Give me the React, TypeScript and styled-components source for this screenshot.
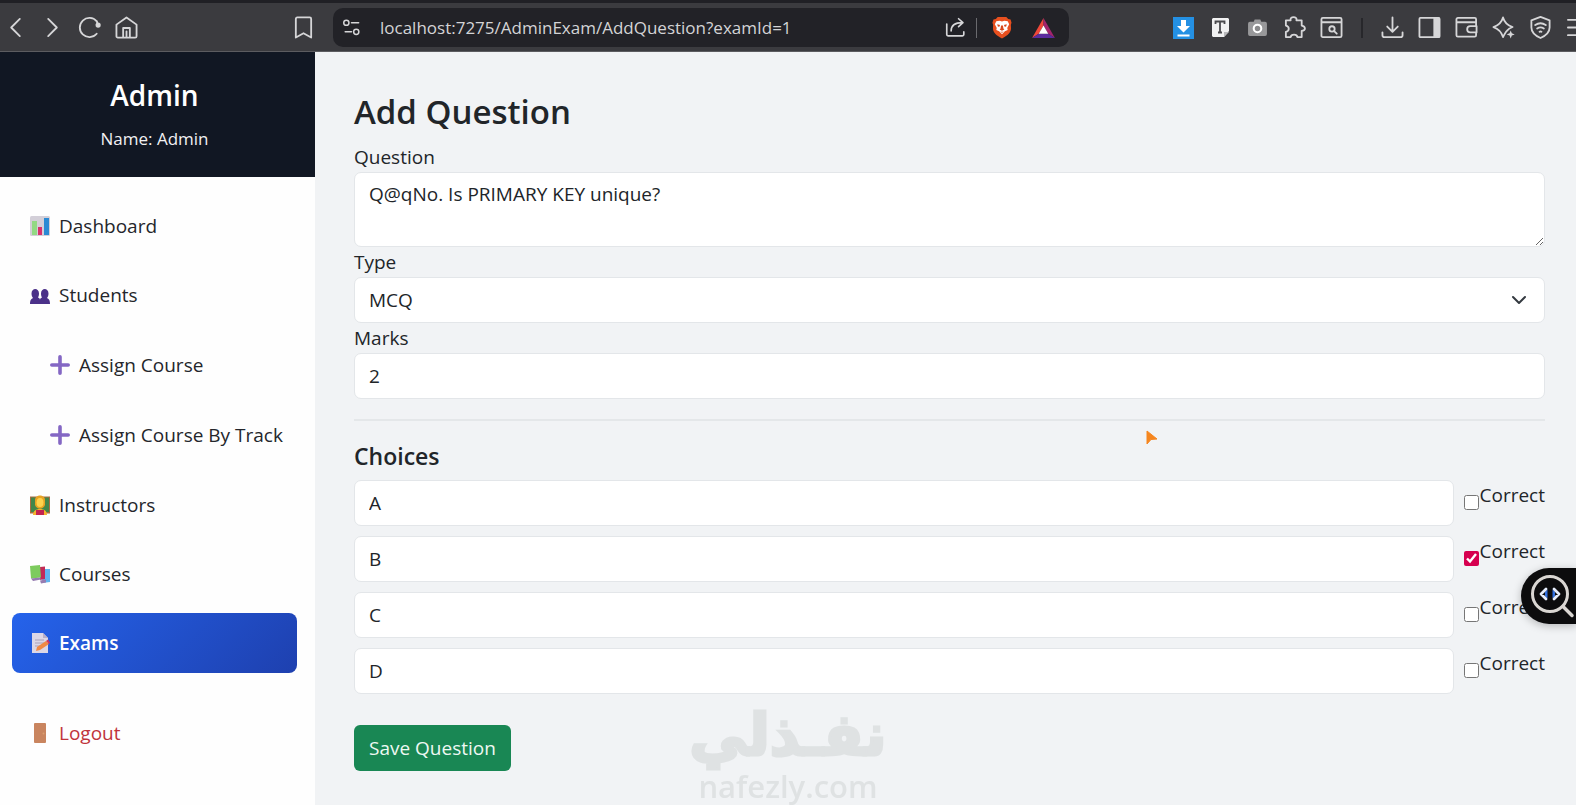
import React, { useState } from "react";
import styled, { createGlobalStyle, css } from "styled-components";

const GlobalStyle = createGlobalStyle`
  *, *::before, *::after { box-sizing: border-box; }
  body {
    margin: 0;
    background: #f1f3f5;
    color: #212529;
    font-family: "Open Sans", "Noto Sans", sans-serif;
    font-size: 19px;
    line-height: 30px;
  }
  h1, h2, h3, p, ul { margin: 0; padding: 0; }
  ul { list-style: none; }
  input, select, textarea, button { font: inherit; color: inherit; }
`;

const Page = styled.div`
  min-height: 100vh;
  display: flex;
  flex-direction: column;
`;

/* ---------- Browser bar ---------- */

const BrowserBar = styled.header`
  height: 52px;
  display: flex;
  align-items: center;
  padding-top: 1px;
  border-top: 3px solid #202025;
  background: #3b3b3f;
  border-bottom: 1px solid #5c5c60;
  overflow: hidden;
`;

const BarGroup = styled.div<{ $side: "left" | "right" }>`
  display: flex;
  align-items: center;
  flex: none;
  ${({ $side }) =>
    $side === "left" ? "margin-left: -3px;" : "margin-left: 96px; margin-right: -20px;"}
`;

const BarButton = styled.button`
  width: 37px;
  height: 38px;
  flex: none;
  padding: 0;
  border: 0;
  background: none;
  color: #d6d6d8;
  display: flex;
  align-items: center;
  justify-content: center;
`;

const Bookmark = styled(BarButton)`
  margin: 0 11px 0 140px;
`;

const AddressBar = styled.div`
  flex: 1;
  min-width: 0;
  height: 39px;
  display: flex;
  align-items: center;
  padding-right: 7px;
  border-radius: 10px;
  background: #222227;
`;

const Address = styled.input`
  flex: 1;
  min-width: 0;
  margin-left: 10px;
  padding: 0;
  border: 0;
  outline: 0;
  background: none;
  color: #d4d4d6;
  font-size: 17px;
`;

const PillDivider = styled.span`
  width: 1px;
  height: 20px;
  margin: 0 6px 0 2px;
  background: #6a6a6e;
`;

const PillActions = styled.div`
  display: flex;
  gap: 5px;
`;

const BarDivider = styled.span`
  width: 2px;
  height: 20px;
  margin: 0 11px;
  background: #27272b;
`;

/* ---------- Sidebar ---------- */

const Body = styled.div`
  flex: 1;
  display: flex;
`;

const Sidebar = styled.aside`
  width: 315px;
  flex: none;
  background: #fefefe;
`;

const Profile = styled.div`
  height: 125px;
  padding: 24px 6px 0 0;
  background: #111723;
  color: #fff;
  text-align: center;
`;

const ProfileTitle = styled.h2`
  font-size: 28px;
  font-weight: 600;
  line-height: 38px;
`;

const ProfileName = styled.p`
  margin-top: 10px;
  font-size: 17px;
  color: #f1f1f3;
`;

const Menu = styled.ul`
  display: flex;
  flex-direction: column;
  gap: 9px;
  padding: 19px 18px 0 12px;
`;

const SubMenu = styled.ul`
  display: flex;
  flex-direction: column;
  gap: 10px;
  padding: 10px 0 1px 20px;
`;

const MenuLink = styled.a<{ $active?: boolean; $danger?: boolean }>`
  height: 60px;
  display: flex;
  align-items: center;
  gap: 9px;
  padding-left: 18px;
  border-radius: 8px;
  color: ${({ $danger }) => ($danger ? "#c0343b" : "#24262b")};
  text-decoration: none;
  white-space: nowrap;
  ${({ $active }) =>
    $active &&
    css`
      background: linear-gradient(135deg, #2563eb, #1e40af);
      color: #fff;
      font-weight: 600;
    `}
`;

const LogoutEntry = styled.li`
  margin-top: 21px;
`;

/* ---------- Form ---------- */

const Content = styled.main`
  flex: 1;
  min-width: 0;
  padding: 38px 31px 0 39px;
`;

const Title = styled.h1`
  font-size: 33px;
  font-weight: 600;
  line-height: 44px;
  margin-bottom: 8px;
`;

const Label = styled.label`
  display: block;
  width: fit-content;
`;

const control = css`
  display: block;
  width: 100%;
  border: 1px solid #e3e6e9;
  border-radius: 7px;
  background: #fff;
  outline: 0;
  padding: 0 14px;
`;

const TextArea = styled.textarea`
  ${control}
  height: 75px;
  padding-top: 6px;
`;

const TextInput = styled.input`
  ${control}
  height: 46px;
`;

const SelectWrap = styled.div`
  position: relative;
`;

const Select = styled.select`
  ${control}
  height: 46px;
  appearance: none;
`;

const Chevron = styled.svg`
  position: absolute;
  right: 18px;
  top: 15px;
  pointer-events: none;
`;

const Divider = styled.hr`
  margin: 20px 0 18px;
  border: 0;
  height: 2px;
  background: #e4e7e9;
`;

const SectionTitle = styled.h3`
  font-size: 23px;
  font-weight: 600;
  line-height: 34px;
  margin-bottom: 7px;
`;

const Choices = styled.div`
  display: flex;
  flex-direction: column;
  gap: 10px;
  margin-bottom: 31px;
`;

const ChoiceRow = styled.div`
  display: flex;
  gap: 10px;
`;

const Correct = styled.label`
  flex: none;
  display: flex;
  gap: 1px;
`;

const CheckBox = styled.input`
  width: 15px;
  height: 15px;
  margin: 15px 0 0;
  accent-color: #d6004f;
`;

const SaveButton = styled.button`
  height: 46px;
  padding: 0 15px;
  border: 0;
  border-radius: 6px;
  background: #198754;
  color: #eef8f2;
`;

/* ---------- Overlays ---------- */

const Watermark = styled.div`
  position: fixed;
  left: 50%;
  bottom: 0;
  transform: translateX(-50%);
  display: flex;
  flex-direction: column;
  align-items: center;
  color: #dfe2e3;
  font-weight: 700;
  pointer-events: none;
`;

const WatermarkArabic = styled.span`
  font-family: "DejaVu Sans", sans-serif;
  font-size: 58px;
  line-height: 64px;
  -webkit-text-stroke: 3px #dfe2e3;
`;

const WatermarkLatin = styled.span`
  font-family: "Open Sans", sans-serif;
  font-weight: 600;
  font-size: 31px;
  line-height: 38px;
`;

const InspectButton = styled.button`
  position: fixed;
  right: 0;
  top: 568px;
  width: 55px;
  height: 56px;
  padding: 0;
  border: 0;
  border-radius: 28px 0 0 28px;
  background: #0c0c0d;
  box-shadow: 0 2px 8px rgba(0, 0, 0, 0.25);
`;

const Pointer = styled.svg`
  position: fixed;
  left: 1146px;
  top: 430px;
`;

/* ---------- Icons ---------- */

type LineProps = { size?: number; children: React.ReactNode };

const Line = ({ size = 23, children }: LineProps) => (
  <svg width={size} height={size} viewBox="0 0 24 24" fill="none" stroke="currentColor"
    strokeWidth="1.9" strokeLinecap="round" strokeLinejoin="round" aria-hidden="true">
    {children}
  </svg>
);

const BackIcon = () => <Line><path d="M16.500 3 7.500 12l9 9" /></Line>;
const ForwardIcon = () => <Line><path d="M7.500 3l9 9-9 9" /></Line>;
const ReloadIcon = () => (
  <Line>
    <path d="M19.500 5.500A10 10 0 1 0 19.500 18.500" />
    <path d="M19.500 5.500l1.500 4" />
    <circle cx="21" cy="9.500" r="2.700" fill="currentColor" stroke="none" />
  </Line>
);
const HomeIcon = () => (
  <Line>
    <path d="M1.500 9 12 1.500 22.500 9v12a1.500 1.500 0 0 1-1.500 1.500H3A1.500 1.500 0 0 1 1.500 21z" />
    <path d="M8.500 22v-9.500h7V22M12 16v6" />
  </Line>
);
const BookmarkIcon = () => (
  <Line><path d="M4 3a1.500 1.500 0 0 1 1.500-1.500h13A1.500 1.500 0 0 1 20 3v19.500L12 18l-8 4.500z" /></Line>
);
const TuneIcon = () => (
  <Line size={19}>
    <circle cx="5.500" cy="6" r="3.300" /><path d="M12 6h9" />
    <circle cx="18" cy="17.500" r="3.300" /><path d="M4 17.500h8" />
  </Line>
);
const ShareIcon = () => (
  <Line size={21}>
    <path d="M2 8v12a1.500 1.500 0 0 0 1.500 1.500H20a1.500 1.500 0 0 0 1.500-1.500v-3" />
    <path d="M7 16c0-6 4-9.500 13-9.500M15.500 2l5 4.500-5 4.500" />
  </Line>
);
const BraveIcon = () => (
  <svg width="20" height="23" viewBox="0 0 21 24" aria-hidden="true">
    <path d="M6 1h9l2 2 2.500.5L20.500 7l-.7 2 .2 4c-.3 4-3 7-9.500 10.500C4 20 1.300 17 1 13l.2-4-.7-2 1-3.500L4 3z" fill="#e8501f" />
    <path d="M4.500 5.500 8 5l2.500.7L13 5l3.500.5L18 8.500l-2 4 .5 2-3 1.500-3 3-3-3-3-1.500.5-2-2-4z" fill="#fff" />
    <path d="M5.500 8.500l3 1-1 2-1.500-.8zM15.500 8.500l-3 1 1 2 1.500-.8zM9.500 10h2l.5 3 1 1-2.500 1.500L8 14l1-1zM8.500 16.500l2 1 2-1" fill="#d9481b" />
  </svg>
);
const BatIcon = () => (
  <svg width="23" height="20" viewBox="0 0 24 21" aria-hidden="true">
    <path d="M12 0 0 21l7-4.500L12 8z" fill="#f0483a" />
    <path d="M12 0l12 21-7-4.500L12 8z" fill="#a3246d" />
    <path d="M0 21h24l-7-4.500H7z" fill="#5b2c9d" />
    <path d="M12 8 7 16.500h10z" fill="#fff" />
  </svg>
);
const SaveExtIcon = () => (
  <svg width="21" height="22" viewBox="0 0 21 22" aria-hidden="true">
    <path d="M0 0h21v22H0z" fill="#2490e3" />
    <path d="M8 3h5v6h4l-6.500 6.500L4 9h4zM4.500 17.500h12v2h-12z" fill="#fff" />
  </svg>
);
const TextExtIcon = () => (
  <svg width="17" height="19" viewBox="0 0 17 19" aria-hidden="true">
    <path d="M1 0h15l1 1v12l-5 6H1l-1-1V1z" fill="#f1f1f2" />
    <path d="M3.500 6V3.500h9V6M8 3.500V14M6 14.500h4" fill="none" stroke="#4a4a4e" strokeWidth="1.800" />
    <path d="M12 19v-5h5z" fill="#b9b9bc" />
  </svg>
);
const CameraIcon = () => (
  <svg width="19" height="17" viewBox="0 0 20 18" aria-hidden="true">
    <path d="M2 3h4l1-2.500h6L14 3h4a2 2 0 0 1 2 2v11a2 2 0 0 1-2 2H2a2 2 0 0 1-2-2V5a2 2 0 0 1 2-2z" fill="#98989a" />
    <circle cx="10" cy="10" r="4" fill="#8a8a8c" stroke="#fff" strokeWidth="2.200" />
  </svg>
);
const PuzzleIcon = () => (
  <Line>
    <path d="M3 4.500h5c-1.500-4.500 7.500-4.500 6 0h5.500v5.500c4.500 1 4.500 5 0 5.500v6.500H15c-.5-3.500-6.500-3.500-7 0H3v-5.500c4-1 4-5.500 0-6.500z" />
  </Line>
);
const PageSearchIcon = () => (
  <Line>
    <rect x="1.500" y="2" width="21" height="20" rx="1.500" /><path d="M2 6.500h20" />
    <circle cx="12.500" cy="13.500" r="2.800" /><path d="M15 16l2.500 2.500" />
  </Line>
);
const DownloadIcon = () => (
  <Line><path d="M12 1.500V16M6.500 11l5.500 5.500 5.500-5.500M1.500 17v3a2 2 0 0 0 2 2h17a2 2 0 0 0 2-2v-3" /></Line>
);
const PanelIcon = () => (
  <Line><rect x="1.500" y="2" width="21" height="20" rx="1" /><path d="M17 2.500h5v19h-5z" fill="currentColor" /></Line>
);
const WalletIcon = () => (
  <Line>
    <path d="M22 7v-3.500A1.500 1.500 0 0 0 20.500 2H3a1.500 1.500 0 0 0-1.500 1.500V20A1.500 1.500 0 0 0 3 21.500h17.500A1.500 1.500 0 0 0 22 20v-2M2 6.500h20V10" />
    <path d="M22.500 10.500H16a3.300 3.300 0 0 0 0 6.600h6.500z" />
  </Line>
);
const SparkleIcon = () => (
  <Line>
    <path d="M15.500 15.500c-1.500 1.500-2.500 3.500-4 6.500-1.500-5-4-8.500-10-10.500 6-2 8.500-4.500 10-10 1.500 5.500 4 8 10 10-2.500 1-4.500 2.200-6 4z" />
    <path d="M19.500 15l1.200 3 3 1.200-3 1.200-1.200 3-1.200-3-3-1.200 3-1.200z" fill="currentColor" stroke="none" />
  </Line>
);
const ShieldIcon = () => (
  <Line>
    <path d="M12 1l9.500 3.500v7.500c0 5-4 8.500-9.500 11-5.500-2.500-9.500-6-9.500-11V4.500z" />
    <path d="M6.500 9.500c3.500-2.500 7.500-2.500 11 0M8.500 13c2.500-1.600 4.500-1.600 7 0M11 16.500c.7-.5 1.300-.5 2 0" />
  </Line>
);
const MenuIcon = () => <Line><path d="M2 4h20M2 12h20M2 20h20" /></Line>;

const GlyphSvg = styled.svg`
  width: 20px;
  height: 20px;
  flex: none;
`;

const Glyph = ({ children }: { children: React.ReactNode }) => (
  <GlyphSvg viewBox="0 0 20 20" aria-hidden="true">{children}</GlyphSvg>
);
const ChartGlyph = () => (
  <Glyph>
    <rect width="20" height="20" rx="1.500" fill="#d3cfd8" />
    <path d="M2 5h5v14H2z" fill="#92d984" /><path d="M8 11h4v8H8z" fill="#d8316c" /><path d="M14 2h5v17h-5z" fill="#2a8ad4" />
  </Glyph>
);
const PeopleGlyph = () => (
  <Glyph>
    <path d="M1.500 8.500c0-6 7.500-6 7.500 0 0 2-.5 3-1 4 1.500.5 2 1.500 2 2.500 0-1 .5-2 2-2.500-.5-1-1-2-1-4 0-6 7.500-6 7.500 0 0 2-.5 3-1.500 4.500 2.500 1 3 3 3 6H0c0-3 .5-5 3-6-1-1.500-1.500-2.500-1.500-4.500z" fill="#4b3189" />
  </Glyph>
);
const PlusGlyph = () => (
  <Glyph><path d="M10 1.800v16.400M1.800 10h16.400" stroke="#8467c4" strokeWidth="3.600" strokeLinecap="round" /></Glyph>
);
const TeacherGlyph = () => (
  <Glyph>
    <rect y="1.500" width="20" height="17" fill="#a86c42" /><rect x="1" y="2.500" width="18" height="14.500" fill="#43864a" />
    <path d="M3 20c0-4 3-6 7-6s7 2 7 6z" fill="#f5b52c" /><path d="M6 15h8v5H6z" fill="#c32450" />
    <path d="M5 5c0-6 10-6 10 0v5c-2 5-8 5-10 0z" fill="#e8a323" /><ellipse cx="10" cy="7.500" rx="3.500" ry="4.500" fill="#ffd34e" />
  </Glyph>
);
const BooksGlyph = () => (
  <Glyph>
    <path d="M13 5h7v13l-8 1z" fill="#61b4ee" /><path d="M10 3l5-.5V15l-5 1z" fill="#c22a56" />
    <path d="M0 2l10-1 1 12.500-10 1z" fill="#7dcb5e" /><path d="M1 14.500l9-1 1 2-8 1.500zM10 16.500l6-1v3l-5 1z" fill="#967bb0" />
  </Glyph>
);
const MemoGlyph = () => (
  <Glyph>
    <path d="M2 0h11l5 5v15H2z" fill="#dcd7e6" /><path d="M13 0v5h5z" fill="#b8b0c8" />
    <path d="M5 7h9M5 10h9M5 13h5" stroke="#a9a2b8" strokeWidth="1.200" />
    <path d="M6 18l1-4 9-6 3 3-9 6z" fill="#f08a45" /><path d="M16 8l2-1.500 2 3L19 11z" fill="#d3365c" />
  </Glyph>
);
const DoorGlyph = () => (
  <Glyph><rect x="4" width="12" height="20" rx="1" fill="#c9855f" /><circle cx="13.500" cy="10.500" r="1" fill="#dba06f" /></Glyph>
);

/* ---------- App ---------- */

const navItems = [
  { label: "Dashboard", Icon: ChartGlyph },
  {
    label: "Students",
    Icon: PeopleGlyph,
    children: ["Assign Course", "Assign Course By Track"],
  },
  { label: "Instructors", Icon: TeacherGlyph },
  { label: "Courses", Icon: BooksGlyph },
  { label: "Exams", Icon: MemoGlyph, active: true },
];

const tools = [
  { label: "Save page", Icon: SaveExtIcon },
  { label: "Text tool", Icon: TextExtIcon },
  { label: "Screenshot", Icon: CameraIcon },
  { label: "Extensions", Icon: PuzzleIcon },
  { label: "Search tabs", Icon: PageSearchIcon },
];

const browserTools = [
  { label: "Downloads", Icon: DownloadIcon },
  { label: "Side panel", Icon: PanelIcon },
  { label: "Wallet", Icon: WalletIcon },
  { label: "Assistant", Icon: SparkleIcon },
  { label: "VPN", Icon: ShieldIcon },
  { label: "Menu", Icon: MenuIcon },
];

export default function App() {
  const [choices, setChoices] = useState([
    { text: "A", correct: false },
    { text: "B", correct: true },
    { text: "C", correct: false },
    { text: "D", correct: false },
  ]);

  const update = (index: number, patch: Partial<{ text: string; correct: boolean }>) =>
    setChoices((list) => list.map((c, i) => (i === index ? { ...c, ...patch } : c)));

  return (
    <Page>
      <GlobalStyle />
      <BrowserBar>
        <BarGroup $side="left">
          <BarButton aria-label="Back"><BackIcon /></BarButton>
          <BarButton aria-label="Forward"><ForwardIcon /></BarButton>
          <BarButton aria-label="Reload"><ReloadIcon /></BarButton>
          <BarButton aria-label="Home"><HomeIcon /></BarButton>
          <Bookmark aria-label="Bookmark"><BookmarkIcon /></Bookmark>
        </BarGroup>
        <AddressBar>
          <BarButton aria-label="Site settings"><TuneIcon /></BarButton>
          <Address aria-label="Address" defaultValue="localhost:7275/AdminExam/AddQuestion?examId=1" />
          <BarButton aria-label="Share"><ShareIcon /></BarButton>
          <PillDivider />
          <PillActions>
            <BarButton aria-label="Shields"><BraveIcon /></BarButton>
            <BarButton aria-label="Rewards"><BatIcon /></BarButton>
          </PillActions>
        </AddressBar>
        <BarGroup $side="right">
          {tools.map(({ label, Icon }) => (
            <BarButton key={label} aria-label={label}><Icon /></BarButton>
          ))}
          <BarDivider />
          {browserTools.map(({ label, Icon }) => (
            <BarButton key={label} aria-label={label}><Icon /></BarButton>
          ))}
        </BarGroup>
      </BrowserBar>

      <Body>
        <Sidebar>
          <Profile>
            <ProfileTitle>Admin</ProfileTitle>
            <ProfileName>Name: Admin</ProfileName>
          </Profile>
          <nav>
            <Menu>
              {navItems.map(({ label, Icon, active, children }) => (
                <li key={label}>
                  <MenuLink href="#" $active={active}><Icon />{label}</MenuLink>
                  {children && (
                    <SubMenu>
                      {children.map((child) => (
                        <li key={child}><MenuLink href="#"><PlusGlyph />{child}</MenuLink></li>
                      ))}
                    </SubMenu>
                  )}
                </li>
              ))}
              <LogoutEntry>
                <MenuLink href="#" $danger><DoorGlyph />Logout</MenuLink>
              </LogoutEntry>
            </Menu>
          </nav>
        </Sidebar>

        <Content>
          <Title>Add Question</Title>
          <form onSubmit={(e) => e.preventDefault()}>
            <Label htmlFor="question">Question</Label>
            <TextArea id="question" defaultValue="Q@qNo. Is PRIMARY KEY unique?" />
            <Label htmlFor="type">Type</Label>
            <SelectWrap>
              <Select id="type" defaultValue="MCQ">
                <option>MCQ</option>
              </Select>
              <Chevron width="16" height="16" viewBox="0 0 16 16" fill="none" stroke="#343a40"
                strokeWidth="2" strokeLinecap="round" strokeLinejoin="round">
                <path d="M2 5l6 6 6-6" />
              </Chevron>
            </SelectWrap>
            <Label htmlFor="marks">Marks</Label>
            <TextInput id="marks" defaultValue="2" />
            <Divider />
            <SectionTitle>Choices</SectionTitle>
            <Choices>
              {choices.map((choice, i) => (
                <ChoiceRow key={i}>
                  <TextInput aria-label={`Choice ${i + 1}`} value={choice.text}
                    onChange={(e) => update(i, { text: e.target.value })} />
                  <Correct>
                    <CheckBox type="checkbox" checked={choice.correct}
                      onChange={(e) => update(i, { correct: e.target.checked })} />
                    Correct
                  </Correct>
                </ChoiceRow>
              ))}
            </Choices>
            <SaveButton type="submit">Save Question</SaveButton>
          </form>
        </Content>
      </Body>

      <Watermark>
        <WatermarkArabic lang="ar" dir="rtl">نفـذلي</WatermarkArabic>
        <WatermarkLatin>nafezly.com</WatermarkLatin>
      </Watermark>

      <InspectButton aria-label="Inspect">
        <svg width="55" height="56" viewBox="0 0 55 56" fill="none" strokeLinecap="round" strokeLinejoin="round">
          <circle cx="29" cy="26" r="17.500" stroke="#d9d6d2" strokeWidth="3" />
          <path d="M42 38.500l9 9" stroke="#d9d6d2" strokeWidth="3.500" />
          <path d="M26.500 21.500v9l-2.500-2.200v-4.600zM31.500 21.500v9l2.500-2.200v-4.600z" fill="#2f6fe0" />
          <path d="M25 21l-5 5 5 5M33 21l5 5-5 5" stroke="#e6eefc" strokeWidth="2.800" />
        </svg>
      </InspectButton>

      <Pointer width="12" height="15" viewBox="0 0 12 15" aria-hidden="true">
        <path d="M1 1l10 8-6 .5L1 14z" fill="#f5861f" stroke="#f5861f" strokeLinejoin="round" />
      </Pointer>
    </Page>
  );
}
